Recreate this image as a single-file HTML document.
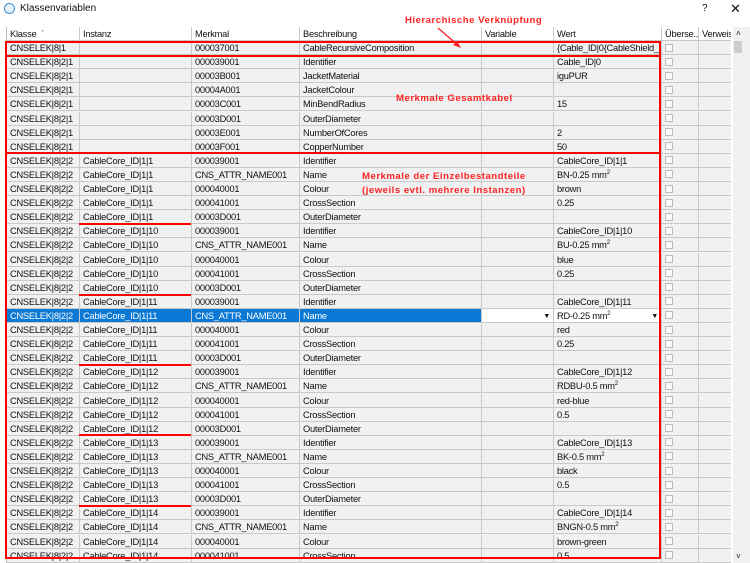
<!DOCTYPE html>
<html><head><meta charset="utf-8">
<style>
*{box-sizing:border-box;margin:0;padding:0}
body{width:750px;height:563px;overflow:hidden;background:#fff;font-family:"Liberation Sans",sans-serif;font-size:9.3px;letter-spacing:-0.25px;color:#111;position:relative}
.title{position:absolute;left:20px;top:3px;font-size:10px;letter-spacing:0}
.icon{position:absolute;left:4px;top:3px;width:11px;height:11px;border:1.5px solid #3a8fd0;border-radius:50%;background:#e8f3fb}
.q{position:absolute;left:702px;top:3px;font-size:10px}
.x{position:absolute;left:730px;top:1px;font-size:13px}
.grid{position:absolute;left:6px;top:27px;width:725px;height:536px;background:#f1f1f1;border-left:1px solid #bbb;overflow:hidden}
.row{position:absolute;left:0;height:14.1px;width:725px;border-bottom:1px solid #c9c9c9}
.row div{position:absolute;top:0;height:100%;border-right:1px solid #c9c9c9;padding-left:3px;line-height:15px;white-space:nowrap;overflow:hidden}
.hd{background:#fff;top:0!important;height:14px!important}
.c0{left:0;width:73px}.c1{left:73px;width:112px}.c2{left:185px;width:108px}.c3{left:293px;width:182px}
.c4{left:475px;width:72px}.c5{left:547px;width:108px}.c6{left:655px;width:37px}.c7{left:692px;width:33px}
.cb{display:inline-block;width:8px;height:8px;border:1px solid #bbb;background:#fafafa;vertical-align:middle;margin-top:-2px}
.sel .c0,.sel .c1,.sel .c2,.sel .c3{background:#0a78d4;color:#fff}
.sel .c4,.sel .c5{background:#fff}
.dd{position:absolute;right:3px;top:0;font-size:7px}
.sb{position:absolute;left:733px;top:27px;width:17px;height:536px;background:#f0f0f0}
.red{position:absolute;border:2px solid #f00}
.ul{position:absolute;height:2px;background:#f00;left:79px;width:112px}
.ann{position:absolute;color:#f22;font-weight:bold;font-size:9.6px;letter-spacing:.5px;white-space:nowrap}
sup{font-size:6px;line-height:0;vertical-align:4px}
</style></head><body>
<div class="icon"></div><div class="title">Klassenvariablen</div><div class="q">?</div><div class="x">✕</div>
<div class="grid">
<div class="row hd"><div class="c0">Klasse &nbsp;ˊ</div><div class="c1">Instanz</div><div class="c2">Merkmal</div><div class="c3">Beschreibung</div><div class="c4">Variable</div><div class="c5">Wert</div><div class="c6">Überse...</div><div class="c7">Verweis</div></div>
<div class="row" style="top:14px"><div class="c0">CNSELEK|8|1</div><div class="c1"></div><div class="c2">000037001</div><div class="c3">CableRecursiveComposition</div><div class="c4"></div><div class="c5">{Cable_ID|0{CableShield_ID|...</div><div class="c6"><span class="cb"></span></div><div class="c7"></div></div>
<div class="row" style="top:28.1px"><div class="c0">CNSELEK|8|2|1</div><div class="c1"></div><div class="c2">000039001</div><div class="c3">Identifier</div><div class="c4"></div><div class="c5">Cable_ID|0</div><div class="c6"><span class="cb"></span></div><div class="c7"></div></div>
<div class="row" style="top:42.2px"><div class="c0">CNSELEK|8|2|1</div><div class="c1"></div><div class="c2">00003B001</div><div class="c3">JacketMaterial</div><div class="c4"></div><div class="c5">iguPUR</div><div class="c6"><span class="cb"></span></div><div class="c7"></div></div>
<div class="row" style="top:56.3px"><div class="c0">CNSELEK|8|2|1</div><div class="c1"></div><div class="c2">00004A001</div><div class="c3">JacketColour</div><div class="c4"></div><div class="c5"></div><div class="c6"><span class="cb"></span></div><div class="c7"></div></div>
<div class="row" style="top:70.4px"><div class="c0">CNSELEK|8|2|1</div><div class="c1"></div><div class="c2">00003C001</div><div class="c3">MinBendRadius</div><div class="c4"></div><div class="c5">15</div><div class="c6"><span class="cb"></span></div><div class="c7"></div></div>
<div class="row" style="top:84.5px"><div class="c0">CNSELEK|8|2|1</div><div class="c1"></div><div class="c2">00003D001</div><div class="c3">OuterDiameter</div><div class="c4"></div><div class="c5"></div><div class="c6"><span class="cb"></span></div><div class="c7"></div></div>
<div class="row" style="top:98.6px"><div class="c0">CNSELEK|8|2|1</div><div class="c1"></div><div class="c2">00003E001</div><div class="c3">NumberOfCores</div><div class="c4"></div><div class="c5">2</div><div class="c6"><span class="cb"></span></div><div class="c7"></div></div>
<div class="row" style="top:112.7px"><div class="c0">CNSELEK|8|2|1</div><div class="c1"></div><div class="c2">00003F001</div><div class="c3">CopperNumber</div><div class="c4"></div><div class="c5">50</div><div class="c6"><span class="cb"></span></div><div class="c7"></div></div>
<div class="row" style="top:126.8px"><div class="c0">CNSELEK|8|2|2</div><div class="c1">CableCore_ID|1|1</div><div class="c2">000039001</div><div class="c3">Identifier</div><div class="c4"></div><div class="c5">CableCore_ID|1|1</div><div class="c6"><span class="cb"></span></div><div class="c7"></div></div>
<div class="row" style="top:140.9px"><div class="c0">CNSELEK|8|2|2</div><div class="c1">CableCore_ID|1|1</div><div class="c2">CNS_ATTR_NAME001</div><div class="c3">Name</div><div class="c4"></div><div class="c5">BN-0.25 mm<sup>2</sup></div><div class="c6"><span class="cb"></span></div><div class="c7"></div></div>
<div class="row" style="top:155px"><div class="c0">CNSELEK|8|2|2</div><div class="c1">CableCore_ID|1|1</div><div class="c2">000040001</div><div class="c3">Colour</div><div class="c4"></div><div class="c5">brown</div><div class="c6"><span class="cb"></span></div><div class="c7"></div></div>
<div class="row" style="top:169.1px"><div class="c0">CNSELEK|8|2|2</div><div class="c1">CableCore_ID|1|1</div><div class="c2">000041001</div><div class="c3">CrossSection</div><div class="c4"></div><div class="c5">0.25</div><div class="c6"><span class="cb"></span></div><div class="c7"></div></div>
<div class="row" style="top:183.2px"><div class="c0">CNSELEK|8|2|2</div><div class="c1">CableCore_ID|1|1</div><div class="c2">00003D001</div><div class="c3">OuterDiameter</div><div class="c4"></div><div class="c5"></div><div class="c6"><span class="cb"></span></div><div class="c7"></div></div>
<div class="row" style="top:197.3px"><div class="c0">CNSELEK|8|2|2</div><div class="c1">CableCore_ID|1|10</div><div class="c2">000039001</div><div class="c3">Identifier</div><div class="c4"></div><div class="c5">CableCore_ID|1|10</div><div class="c6"><span class="cb"></span></div><div class="c7"></div></div>
<div class="row" style="top:211.4px"><div class="c0">CNSELEK|8|2|2</div><div class="c1">CableCore_ID|1|10</div><div class="c2">CNS_ATTR_NAME001</div><div class="c3">Name</div><div class="c4"></div><div class="c5">BU-0.25 mm<sup>2</sup></div><div class="c6"><span class="cb"></span></div><div class="c7"></div></div>
<div class="row" style="top:225.5px"><div class="c0">CNSELEK|8|2|2</div><div class="c1">CableCore_ID|1|10</div><div class="c2">000040001</div><div class="c3">Colour</div><div class="c4"></div><div class="c5">blue</div><div class="c6"><span class="cb"></span></div><div class="c7"></div></div>
<div class="row" style="top:239.6px"><div class="c0">CNSELEK|8|2|2</div><div class="c1">CableCore_ID|1|10</div><div class="c2">000041001</div><div class="c3">CrossSection</div><div class="c4"></div><div class="c5">0.25</div><div class="c6"><span class="cb"></span></div><div class="c7"></div></div>
<div class="row" style="top:253.7px"><div class="c0">CNSELEK|8|2|2</div><div class="c1">CableCore_ID|1|10</div><div class="c2">00003D001</div><div class="c3">OuterDiameter</div><div class="c4"></div><div class="c5"></div><div class="c6"><span class="cb"></span></div><div class="c7"></div></div>
<div class="row" style="top:267.8px"><div class="c0">CNSELEK|8|2|2</div><div class="c1">CableCore_ID|1|11</div><div class="c2">000039001</div><div class="c3">Identifier</div><div class="c4"></div><div class="c5">CableCore_ID|1|11</div><div class="c6"><span class="cb"></span></div><div class="c7"></div></div>
<div class="row sel" style="top:281.9px"><div class="c0">CNSELEK|8|2|2</div><div class="c1">CableCore_ID|1|11</div><div class="c2">CNS_ATTR_NAME001</div><div class="c3">Name</div><div class="c4"><span class="dd">▼</span></div><div class="c5">RD-0.25 mm<sup>2</sup><span class="dd">▼</span></div><div class="c6"><span class="cb"></span></div><div class="c7"></div></div>
<div class="row" style="top:296px"><div class="c0">CNSELEK|8|2|2</div><div class="c1">CableCore_ID|1|11</div><div class="c2">000040001</div><div class="c3">Colour</div><div class="c4"></div><div class="c5">red</div><div class="c6"><span class="cb"></span></div><div class="c7"></div></div>
<div class="row" style="top:310.1px"><div class="c0">CNSELEK|8|2|2</div><div class="c1">CableCore_ID|1|11</div><div class="c2">000041001</div><div class="c3">CrossSection</div><div class="c4"></div><div class="c5">0.25</div><div class="c6"><span class="cb"></span></div><div class="c7"></div></div>
<div class="row" style="top:324.2px"><div class="c0">CNSELEK|8|2|2</div><div class="c1">CableCore_ID|1|11</div><div class="c2">00003D001</div><div class="c3">OuterDiameter</div><div class="c4"></div><div class="c5"></div><div class="c6"><span class="cb"></span></div><div class="c7"></div></div>
<div class="row" style="top:338.3px"><div class="c0">CNSELEK|8|2|2</div><div class="c1">CableCore_ID|1|12</div><div class="c2">000039001</div><div class="c3">Identifier</div><div class="c4"></div><div class="c5">CableCore_ID|1|12</div><div class="c6"><span class="cb"></span></div><div class="c7"></div></div>
<div class="row" style="top:352.4px"><div class="c0">CNSELEK|8|2|2</div><div class="c1">CableCore_ID|1|12</div><div class="c2">CNS_ATTR_NAME001</div><div class="c3">Name</div><div class="c4"></div><div class="c5">RDBU-0.5 mm<sup>2</sup></div><div class="c6"><span class="cb"></span></div><div class="c7"></div></div>
<div class="row" style="top:366.5px"><div class="c0">CNSELEK|8|2|2</div><div class="c1">CableCore_ID|1|12</div><div class="c2">000040001</div><div class="c3">Colour</div><div class="c4"></div><div class="c5">red-blue</div><div class="c6"><span class="cb"></span></div><div class="c7"></div></div>
<div class="row" style="top:380.6px"><div class="c0">CNSELEK|8|2|2</div><div class="c1">CableCore_ID|1|12</div><div class="c2">000041001</div><div class="c3">CrossSection</div><div class="c4"></div><div class="c5">0.5</div><div class="c6"><span class="cb"></span></div><div class="c7"></div></div>
<div class="row" style="top:394.7px"><div class="c0">CNSELEK|8|2|2</div><div class="c1">CableCore_ID|1|12</div><div class="c2">00003D001</div><div class="c3">OuterDiameter</div><div class="c4"></div><div class="c5"></div><div class="c6"><span class="cb"></span></div><div class="c7"></div></div>
<div class="row" style="top:408.8px"><div class="c0">CNSELEK|8|2|2</div><div class="c1">CableCore_ID|1|13</div><div class="c2">000039001</div><div class="c3">Identifier</div><div class="c4"></div><div class="c5">CableCore_ID|1|13</div><div class="c6"><span class="cb"></span></div><div class="c7"></div></div>
<div class="row" style="top:422.9px"><div class="c0">CNSELEK|8|2|2</div><div class="c1">CableCore_ID|1|13</div><div class="c2">CNS_ATTR_NAME001</div><div class="c3">Name</div><div class="c4"></div><div class="c5">BK-0.5 mm<sup>2</sup></div><div class="c6"><span class="cb"></span></div><div class="c7"></div></div>
<div class="row" style="top:437px"><div class="c0">CNSELEK|8|2|2</div><div class="c1">CableCore_ID|1|13</div><div class="c2">000040001</div><div class="c3">Colour</div><div class="c4"></div><div class="c5">black</div><div class="c6"><span class="cb"></span></div><div class="c7"></div></div>
<div class="row" style="top:451.1px"><div class="c0">CNSELEK|8|2|2</div><div class="c1">CableCore_ID|1|13</div><div class="c2">000041001</div><div class="c3">CrossSection</div><div class="c4"></div><div class="c5">0.5</div><div class="c6"><span class="cb"></span></div><div class="c7"></div></div>
<div class="row" style="top:465.2px"><div class="c0">CNSELEK|8|2|2</div><div class="c1">CableCore_ID|1|13</div><div class="c2">00003D001</div><div class="c3">OuterDiameter</div><div class="c4"></div><div class="c5"></div><div class="c6"><span class="cb"></span></div><div class="c7"></div></div>
<div class="row" style="top:479.3px"><div class="c0">CNSELEK|8|2|2</div><div class="c1">CableCore_ID|1|14</div><div class="c2">000039001</div><div class="c3">Identifier</div><div class="c4"></div><div class="c5">CableCore_ID|1|14</div><div class="c6"><span class="cb"></span></div><div class="c7"></div></div>
<div class="row" style="top:493.4px"><div class="c0">CNSELEK|8|2|2</div><div class="c1">CableCore_ID|1|14</div><div class="c2">CNS_ATTR_NAME001</div><div class="c3">Name</div><div class="c4"></div><div class="c5">BNGN-0.5 mm<sup>2</sup></div><div class="c6"><span class="cb"></span></div><div class="c7"></div></div>
<div class="row" style="top:507.5px"><div class="c0">CNSELEK|8|2|2</div><div class="c1">CableCore_ID|1|14</div><div class="c2">000040001</div><div class="c3">Colour</div><div class="c4"></div><div class="c5">brown-green</div><div class="c6"><span class="cb"></span></div><div class="c7"></div></div>
<div class="row" style="top:521.6px"><div class="c0">CNSELEK|8|2|2</div><div class="c1">CableCore_ID|1|14</div><div class="c2">000041001</div><div class="c3">CrossSection</div><div class="c4"></div><div class="c5">0.5</div><div class="c6"><span class="cb"></span></div><div class="c7"></div></div>
</div>
<div class="sb"><div style="position:absolute;left:3px;top:2px;font-size:8px">˄</div><div style="position:absolute;left:1px;top:14px;width:8px;height:12px;background:#cdcdcd"></div><div style="position:absolute;left:3px;bottom:2px;font-size:8px">˅</div></div>
<div class="red" style="left:5px;top:41px;width:656px;height:16px"></div>
<div class="red" style="left:5px;top:55px;width:656px;height:99px"></div>
<div class="red" style="left:5px;top:152px;width:656px;height:407px"></div>
<div class="ul" style="top:223px"></div>
<div class="ul" style="top:294px"></div>
<div class="ul" style="top:364px"></div>
<div class="ul" style="top:434px"></div>
<div class="ul" style="top:505px"></div>
<div class="ann" style="left:405px;top:15px">Hierarchische Verknüpfung</div>
<div class="ann" style="left:396px;top:93px">Merkmale Gesamtkabel</div>
<div class="ann" style="left:362px;top:171px">Merkmale der Einzelbestandteile</div>
<div class="ann" style="left:362px;top:185px">(jeweils evtl. mehrere Instanzen)</div>
<svg style="position:absolute;left:0;top:0" width="750" height="563"><line x1="438" y1="28" x2="459" y2="46" stroke="#f22" stroke-width="1.3"/><path d="M461 48 L453 45 L457 41 Z" fill="#f22"/></svg>
</body></html>
